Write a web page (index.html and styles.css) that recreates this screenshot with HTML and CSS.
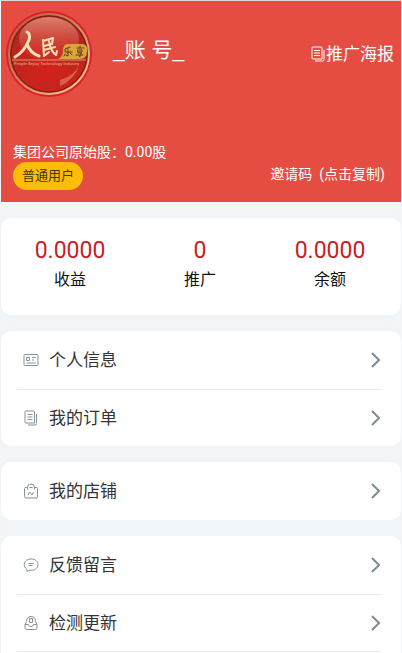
FILE: index.html
```html
<!DOCTYPE html>
<html lang="zh-CN">
<head>
<meta charset="utf-8">
<meta name="viewport" content="width=device-width, initial-scale=1">
<title>个人中心</title>
<link rel="stylesheet" href="styles.css">
</head>
<body>
<header class="hero">
  <div class="hero-top">
    <svg class="avatar" viewBox="0 0 86 88" role="img" aria-label="人民乐享">
      <defs>
        <radialGradient id="ball" cx="50%" cy="70%" r="65%">
          <stop offset="0" stop-color="#d2221d"/><stop offset=".6" stop-color="#c4241e"/><stop offset="1" stop-color="#a4281f"/>
        </radialGradient>
        <linearGradient id="shine" x1="0" y1="0" x2="0" y2="1">
          <stop offset="0" stop-color="#e8907c" stop-opacity=".85"/><stop offset="1" stop-color="#cf4030" stop-opacity=".2"/>
        </linearGradient>
        <linearGradient id="gold" x1="0" y1="0" x2="1" y2="1">
          <stop offset="0" stop-color="#b4583c"/><stop offset=".5" stop-color="#cf8f60"/><stop offset="1" stop-color="#f4d99c"/>
        </linearGradient>
      </defs>
      <circle cx="43" cy="44" r="43" fill="#dc2029"/>
      <circle cx="43" cy="44" r="40" fill="url(#ball)" stroke="url(#gold)" stroke-width="2"/>
      <circle cx="43" cy="44" r="38" fill="none" stroke="#7d1b13" stroke-width="1"/>
      <ellipse cx="43" cy="29" rx="30" ry="22" fill="url(#shine)"/>
      <path d="M54 76Q68 70 73 56Q67 66 54 70Z" fill="#ee9a72" opacity=".5"/>
      <path d="M62 34h13q6 0 6 5v2q0 8-7 8H52q5-2 5-8 0-7 5-7z" fill="#d9a63c"/>
      <path d="M6 50h74" stroke="#d79a6c" stroke-width="1"/>
      <g fill="none" stroke="#f8dfb5" stroke-linecap="round" stroke-linejoin="round">
        <path d="M21 22q4 2 2 8Q18 42 9 47M21 34q3 9 12 12" stroke-width="3"/>
        <path d="M37 31l10-3-1 6-8 2M37 30l1 16 5-4M38 40l11-3M43 31q2 11 7 14l1-4" stroke-width="2"/>
      </g>
      <g fill="none" stroke="#653718" stroke-width="1" stroke-linecap="round">
        <path d="M64 37l-5 2v3h7M62 39v7l-2-1M59 44l-1 2M64 43l2 2M71 38h7M74 36v2M72 40h4v2h-4zM72 43h4l-2 2v2l-1-1M70 45h7"/>
      </g>
      <text class="avatar-caption" x="8" y="55">People Enjoy Technology Industry</text>
    </svg>
    <h1 class="account">_账 号_</h1>
    <a class="poster" href="#poster">
      <svg class="poster-icon" viewBox="0 0 16 16"><path d="M3 1h8a1 1 0 0 1 1 1v11H3a1 1 0 0 1-1-1V2a1 1 0 0 1 1-1zM4 4.500h6M4 7h6M4 9.500h6M14 4v9.500a1.500 1.500 0 0 1-1.500 1.500H5"/></svg>推广海报
    </a>
  </div>
  <div class="hero-bottom">
    <div>
      <p class="shares">集团公司原始股：0.00股</p>
      <span class="level">普通用户</span>
    </div>
    <button class="invite" type="button">邀请码&nbsp; (点击复制)</button>
  </div>
</header>
<main class="content">
  <dl class="card stats">
    <div class="stat"><dt>收益</dt><dd>0.0000</dd></div>
    <div class="stat"><dt>推广</dt><dd>0</dd></div>
    <div class="stat"><dt>余额</dt><dd>0.0000</dd></div>
  </dl>
  <nav class="card menu">
    <a class="row" href="#profile">
      <svg class="icon" viewBox="0 0 16 16"><rect x="1" y="2.500" width="14" height="11" rx="1"/><path d="M3.500 5.500h3v3h-3zM9 5.500h4M9 8h2M3.500 11h9"/></svg>
      <span>个人信息</span>
      <svg class="arrow" viewBox="0 0 10 16"><path d="M1 1l7 7-7 7"/></svg>
    </a>
    <a class="row" href="#orders">
      <svg class="icon" viewBox="0 0 16 16"><path d="M3 1h7.500a1 1 0 0 1 1 1v11H3a1 1 0 0 1-1-1V2a1 1 0 0 1 1-1zM4.500 4.500h5M4.500 7h5M4.500 9.500h5M13.500 4v9.500a1.500 1.500 0 0 1-1.500 1.500H5"/></svg>
      <span>我的订单</span>
      <svg class="arrow" viewBox="0 0 10 16"><path d="M1 1l7 7-7 7"/></svg>
    </a>
  </nav>
  <nav class="card menu">
    <a class="row" href="#shop">
      <svg class="icon" viewBox="0 0 16 16"><path d="M4.500 4.500h-2q-1 0-1 1v8q0 1.500 1.500 1.500h10q1.500 0 1.500-1.500v-8q0-1-1-1h-2M4.500 6.500V4.500a3.500 3.500 0 0 1 7 0v2M6.500 4.500h3M5 12l1.500-3 2.500 3 1.500-3"/></svg>
      <span>我的店铺</span>
      <svg class="arrow" viewBox="0 0 10 16"><path d="M1 1l7 7-7 7"/></svg>
    </a>
  </nav>
  <nav class="card menu menu-last">
    <a class="row" href="#feedback">
      <svg class="icon" viewBox="0 0 16 16"><path d="M4 12.500C-1 9 1 2 8 2c4.500 0 7 2.500 7 5.500 0 4-4 6.500-8 5.500l-3 1.500zM5.500 6.500h5M5.500 8.500h4"/></svg>
      <span>反馈留言</span>
      <svg class="arrow" viewBox="0 0 10 16"><path d="M1 1l7 7-7 7"/></svg>
    </a>
    <a class="row" href="#update">
      <svg class="icon" viewBox="0 0 16 16"><path d="M2 9.500V13q0 1.500 1.500 1.500h9Q14 14.500 14 13V9.500M2 9.500h3.500q0 2 2.500 2t2.500-2H14M2 9.500l1.500-3C3.500 3 5.500 1.500 8 1.500s4.500 1.500 4.500 5l1.500 3M6.500 7.500v-4h3v4z"/></svg>
      <span>检测更新</span>
      <svg class="arrow" viewBox="0 0 10 16"><path d="M1 1l7 7-7 7"/></svg>
    </a>
  </nav>
</main>
</body>
</html>
```
FILE: styles.css
```css
* {
  box-sizing: border-box;
}

body {
  display: flex;
  flex-direction: column;
  min-height: 100vh;
  margin: 0;
  padding: 0 1px;
  background: #f3f6f8;
  color: #333;
  font-family: Roboto, "Noto Sans CJK SC", sans-serif;
}

h1, p, dl, dd {
  margin: 0;
}

a {
  color: inherit;
  text-decoration: none;
}

.hero {
  display: flex;
  flex-direction: column;
  gap: 44px;
  padding: 9px 7px 12px 5px;
  border-top: 1px solid #d8d8d8;
  background: #e54d42;
  color: #fff;
}

.hero-top {
  display: flex;
  align-items: center;
}

.avatar {
  width: 86px;
  height: 88px;
}

.avatar-caption {
  fill: #d99a70;
  font-family: "Liberation Sans", sans-serif;
  font-size: 4px;
  font-weight: 700;
}

.account {
  flex: 1;
  padding: 0 0 8px 21px;
  font-family: "Liberation Sans", "Noto Sans CJK SC", sans-serif;
  font-size: 21px;
  font-weight: 400;
  line-height: 30px;
}

.poster {
  display: flex;
  align-items: center;
  font-size: 17px;
  line-height: 24px;
}

.poster-icon {
  width: 16px;
  height: 16px;
  fill: none;
  stroke: currentColor;
}

.hero-bottom {
  display: flex;
  align-items: flex-end;
  justify-content: space-between;
  padding: 0 9px 0 7px;
}

.shares {
  font-size: 14px;
  line-height: 20px;
}

.level {
  display: inline-block;
  padding: 0 9px;
  border-radius: 14px;
  background: #fbbd08;
  color: #463508;
  font-size: 13px;
  line-height: 28px;
}

.invite {
  padding: 0 0 6px;
  border: 0;
  background: none;
  color: inherit;
  font: inherit;
  font-size: 14px;
  line-height: 20px;
}

.content {
  display: flex;
  flex: 1;
  flex-direction: column;
  gap: 16px;
  padding-top: 16px;
}

.card {
  border-radius: 10px;
  background: #fff;
  box-shadow: 0 0 8px #edf1f4;
}

.stats {
  display: grid;
  grid-template-columns: repeat(3, 1fr);
  padding: 18px 6px 21px 4px;
}

.stat {
  display: flex;
  flex-direction: column-reverse;
  text-align: center;
}

.stat dt {
  color: #111;
  font-size: 16px;
  line-height: 28px;
}

.stat dd {
  color: #c81e25;
  font-size: 23px;
  line-height: 30px;
}

.menu {
  padding: 0 20px 0 16px;
}

.menu-last {
  flex: 1;
  border-radius: 10px 10px 0 0;
}

.row {
  display: grid;
  grid-template-columns: 16px 1fr 10px;
  align-items: center;
  gap: 10px;
  min-height: 58px;
  padding: 0 0 0 6px;
  font-size: 17px;
  line-height: 24px;
}

.row + .row {
  min-height: 57px;
  border-top: 1px solid #e8eaec;
}

.menu-last .row:last-child {
  min-height: 58px;
  border-bottom: 1px solid #e8eaec;
}

.icon {
  width: 16px;
  height: 16px;
  fill: none;
  stroke: #84929a;
}

.arrow {
  width: 10px;
  height: 16px;
  fill: none;
  stroke: #7e8b92;
  stroke-width: 2;
}
```
